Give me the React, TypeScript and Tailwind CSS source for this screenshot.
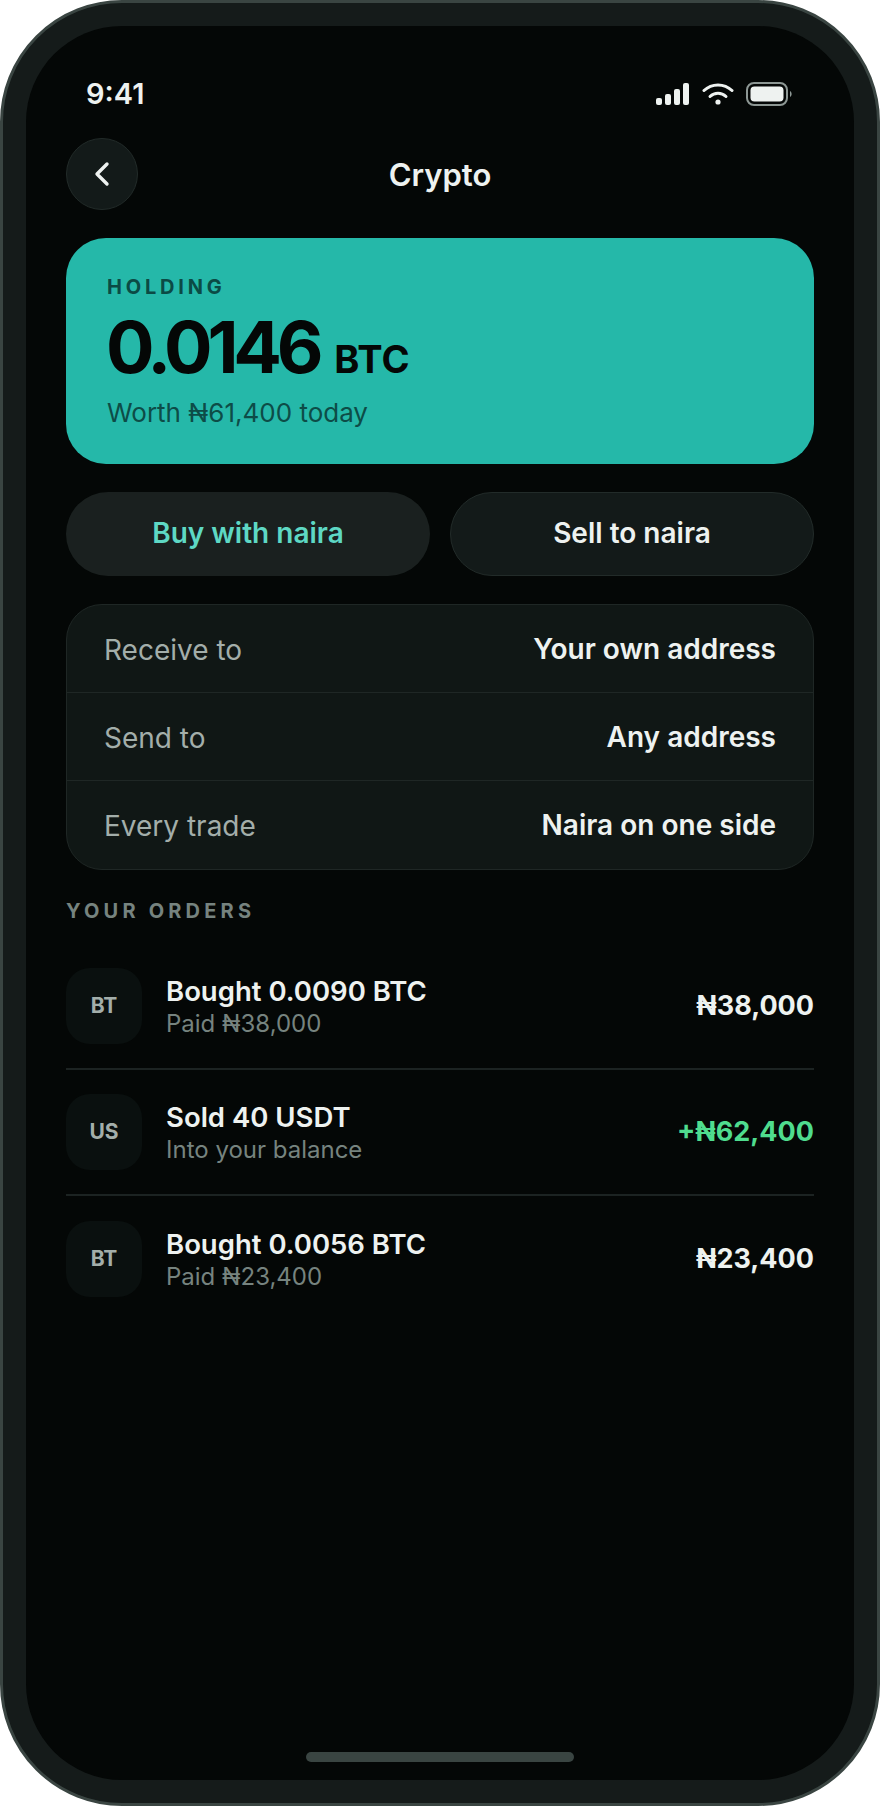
const orders = [
  { code: "BT", title: "Bought 0.0090 BTC", sub: "Paid ₦38,000", amount: "₦38,000", tone: "text-[#eef2f0]" },
  { code: "US", title: "Sold 40 USDT", sub: "Into your balance", amount: "+₦62,400", tone: "text-[#4fdc8e]" },
  { code: "BT", title: "Bought 0.0056 BTC", sub: "Paid ₦23,400", amount: "₦23,400", tone: "text-[#eef2f0]" },
];

const facts = [
  { label: "Receive to", value: "Your own address" },
  { label: "Send to", value: "Any address" },
  { label: "Every trade", value: "Naira on one side" },
];

function StatusIcons() {
  return (
    <div className="flex items-center gap-[12px]">
      <svg width="34" height="22" viewBox="0 0 34 22" fill="#eef2f0">
        <rect x="0" y="15" width="6" height="7" rx="2" />
        <rect x="9" y="11" width="6" height="11" rx="2" />
        <rect x="18" y="6" width="6" height="16" rx="2" />
        <rect x="27" y="0" width="6" height="22" rx="2" />
      </svg>
      <svg width="32" height="22" viewBox="0 0 32 22" fill="none" stroke="#eef2f0" strokeWidth="3" strokeLinecap="round">
        <path d="M2 7.5C9.8 0 22.2 0 30 7.5" />
        <path d="M8 13.5c4.6-4.4 11.4-4.4 16 0" />
        <circle cx="16" cy="19" r="2.6" fill="#eef2f0" stroke="none" />
      </svg>
      <svg width="46" height="24" viewBox="0 0 46 24" fill="none">
        <rect x="1" y="1" width="40" height="22" rx="7" stroke="#8d9794" strokeWidth="2" />
        <rect x="4.5" y="4.5" width="33" height="15" rx="4" fill="#eef2f0" />
        <path d="M44 9v6c1-.5 1.6-1.6 1.6-3S45 9.500 44 9Z" fill="#8d9794" />
      </svg>
    </div>
  );
}

export default function App() {
  return (
    <div className="w-[880px] h-[1806px] bg-white font-['Inter',sans-serif]">
      <div className="h-full rounded-[122px] border-[3px] border-[#3a4542] bg-[#151b1a] p-[23px]">
        <div className="flex h-full flex-col rounded-[96px] bg-[#040706] px-[40px]">
          <div className="flex h-[85px] items-end justify-between pl-[20px] pr-[22px]">
            <span className="text-[29px] leading-[34px] font-semibold text-[#eef2f0]">9:41</span>
            <div className="pb-[5px]">
              <StatusIcons />
            </div>
          </div>

          <div className="relative mt-[27px] flex h-[72px] items-center justify-center">
            <button className="absolute left-0 top-0 flex h-[72px] w-[72px] items-center justify-center rounded-full border border-[#222b29] bg-[#131a19]">
              <svg width="20" height="26" viewBox="0 0 20 26" fill="none" stroke="#eef2f0" strokeWidth="3.4" strokeLinecap="round" strokeLinejoin="round">
                <path d="M15 3 5 13l10 10" />
              </svg>
            </button>
            <h1 className="pt-[2px] text-[31px] font-semibold leading-[36px] text-[#eef2f0]">Crypto</h1>
          </div>

          <div className="mt-[28px] h-[226px] rounded-[40px] bg-[#25b8a9] pl-[40px] pr-[41px] pt-[38px]">
            <p className="pl-[1px] text-[20px] leading-[22px] font-bold tracking-[0.19em] text-[#0b4a45]">HOLDING</p>
            <div className="mt-[13px] flex items-baseline gap-[16px]">
              <span className="text-[72px] leading-[72px] font-bold tracking-[-0.072em] text-[#040706]">0.0146</span>
              <span className="text-[38px] leading-[40px] font-bold text-[#040706]">BTC</span>
            </div>
            <p className="mt-[15px] pl-[1px] text-[26px] leading-[30px] text-[#0d4c47]">Worth ₦61,400 today</p>
          </div>

          <div className="mt-[28px] grid grid-cols-2 gap-[20px]">
            <button className="h-[84px] rounded-full bg-[#1a201f] pb-[2px] text-[28px] font-semibold text-[#5ed8c4]">Buy with naira</button>
            <button className="h-[84px] rounded-full border border-[#222b29] bg-[#131a19] pb-[2px] text-[28px] font-semibold text-[#eef2f0]">Sell to naira</button>
          </div>

          <div className="mt-[28px] divide-y divide-[#1f2725] rounded-[36px] border border-[#1f2725] bg-[#101715]">
            {facts.map((f) => (
              <div key={f.label} className="flex h-[88px] items-center justify-between pl-[37px] pr-[37px]">
                <span className="pt-[2px] text-[28px] text-[#a3aeaa]">{f.label}</span>
                <span className="text-[28px] font-semibold text-[#eef2f0]">{f.value}</span>
              </div>
            ))}
          </div>

          <p className="mt-[29px] text-[20px] leading-[24px] font-bold tracking-[0.21em] text-[#76837f]">YOUR ORDERS</p>

          <div className="mt-[21px] divide-y-2 divide-[#1c2322]">
            {orders.map((o) => (
              <div key={o.title} className="flex h-[126px] items-center">
                <div className="flex h-[76px] w-[76px] items-center justify-center rounded-[24px] bg-[#0a100f] text-[21px] font-bold text-[#a3aeaa]">{o.code}</div>
                <div className="ml-[24px] flex-1">
                  <p className="text-[27.5px] leading-[32px] font-semibold text-[#eef2f0]">{o.title}</p>
                  <p className="pt-[3px] text-[24px] leading-[28px] text-[#76837f]">{o.sub}</p>
                </div>
                <span className={"text-[27px] font-bold " + o.tone}>{o.amount}</span>
              </div>
            ))}
          </div>

          <div className="mt-auto mb-[18px] h-[10px] w-[268px] self-center rounded-full bg-[#3a4542]" />
        </div>
      </div>
    </div>
  );
}
